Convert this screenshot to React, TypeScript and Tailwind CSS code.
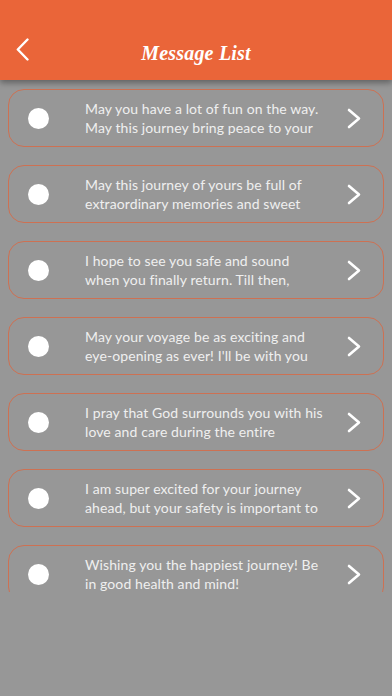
import React from "react";

const messages = [
  ["May you have a lot of fun on the way.", "May this journey bring peace to your"],
  ["May this journey of yours be full of", "extraordinary memories and sweet"],
  ["I hope to see you safe and sound", "when you finally return. Till then,"],
  ["May your voyage be as exciting and", "eye-opening as ever! I'll be with you"],
  ["I pray that God surrounds you with his", "love and care during the entire"],
  ["I am super excited for your journey", "ahead, but your safety is important to"],
  ["Wishing you the happiest journey! Be", "in good health and mind!"],
];

function Chevron() {
  return (
    <svg viewBox="0 0 14 21" className="w-[14px] h-[21px] text-white mr-[22px] shrink-0" fill="none" stroke="currentColor" strokeWidth={2.6} strokeLinecap="round" strokeLinejoin="round">
      <path d="M2 2l10 8.5L2 19" />
    </svg>
  );
}

export default function App() {
  return (
    <div className="w-[392px] h-[696px] bg-[#979797] overflow-hidden relative" style={{ fontFamily: "Lato, 'Open Sans', sans-serif" }}>
      <div className="relative z-10 h-[80px] bg-[#ea6539] flex items-end shadow-[0_3px_6px_rgba(0,0,0,0.35)]">
        <div className="w-full h-[52px] flex items-center relative">
          <svg viewBox="0 0 13 23" className="absolute left-[16px] top-[10px] w-[13px] h-[23px] text-white" fill="none" stroke="currentColor" strokeWidth={2.4} strokeLinecap="round" strokeLinejoin="round">
            <path d="M11.5 1.5L1.8 11.5l9.7 10" />
          </svg>
          <div className="w-full text-center text-white text-[20px] font-bold italic tracking-[0.2px] -mt-[2px]" style={{ fontFamily: "'Liberation Serif', serif" }}>
            Message List
          </div>
        </div>
      </div>
      <div className="h-[512px] overflow-hidden flex flex-col gap-[18px] px-[8px] pt-[9px]">
        {messages.map((m, i) => (
          <div key={i} className="shrink-0 h-[58px] rounded-[16px] border border-[#cd7153] flex items-center">
            <div className="w-[21px] h-[21px] rounded-full bg-white ml-[19px] shrink-0" />
            <div className="ml-[36px] flex-1 text-[14px] leading-[19px] text-[#efefef] whitespace-nowrap tracking-[0.1px]">
              <div>{m[0]}</div>
              <div>{m[1]}</div>
            </div>
            <Chevron />
          </div>
        ))}
      </div>
    </div>
  );
}
